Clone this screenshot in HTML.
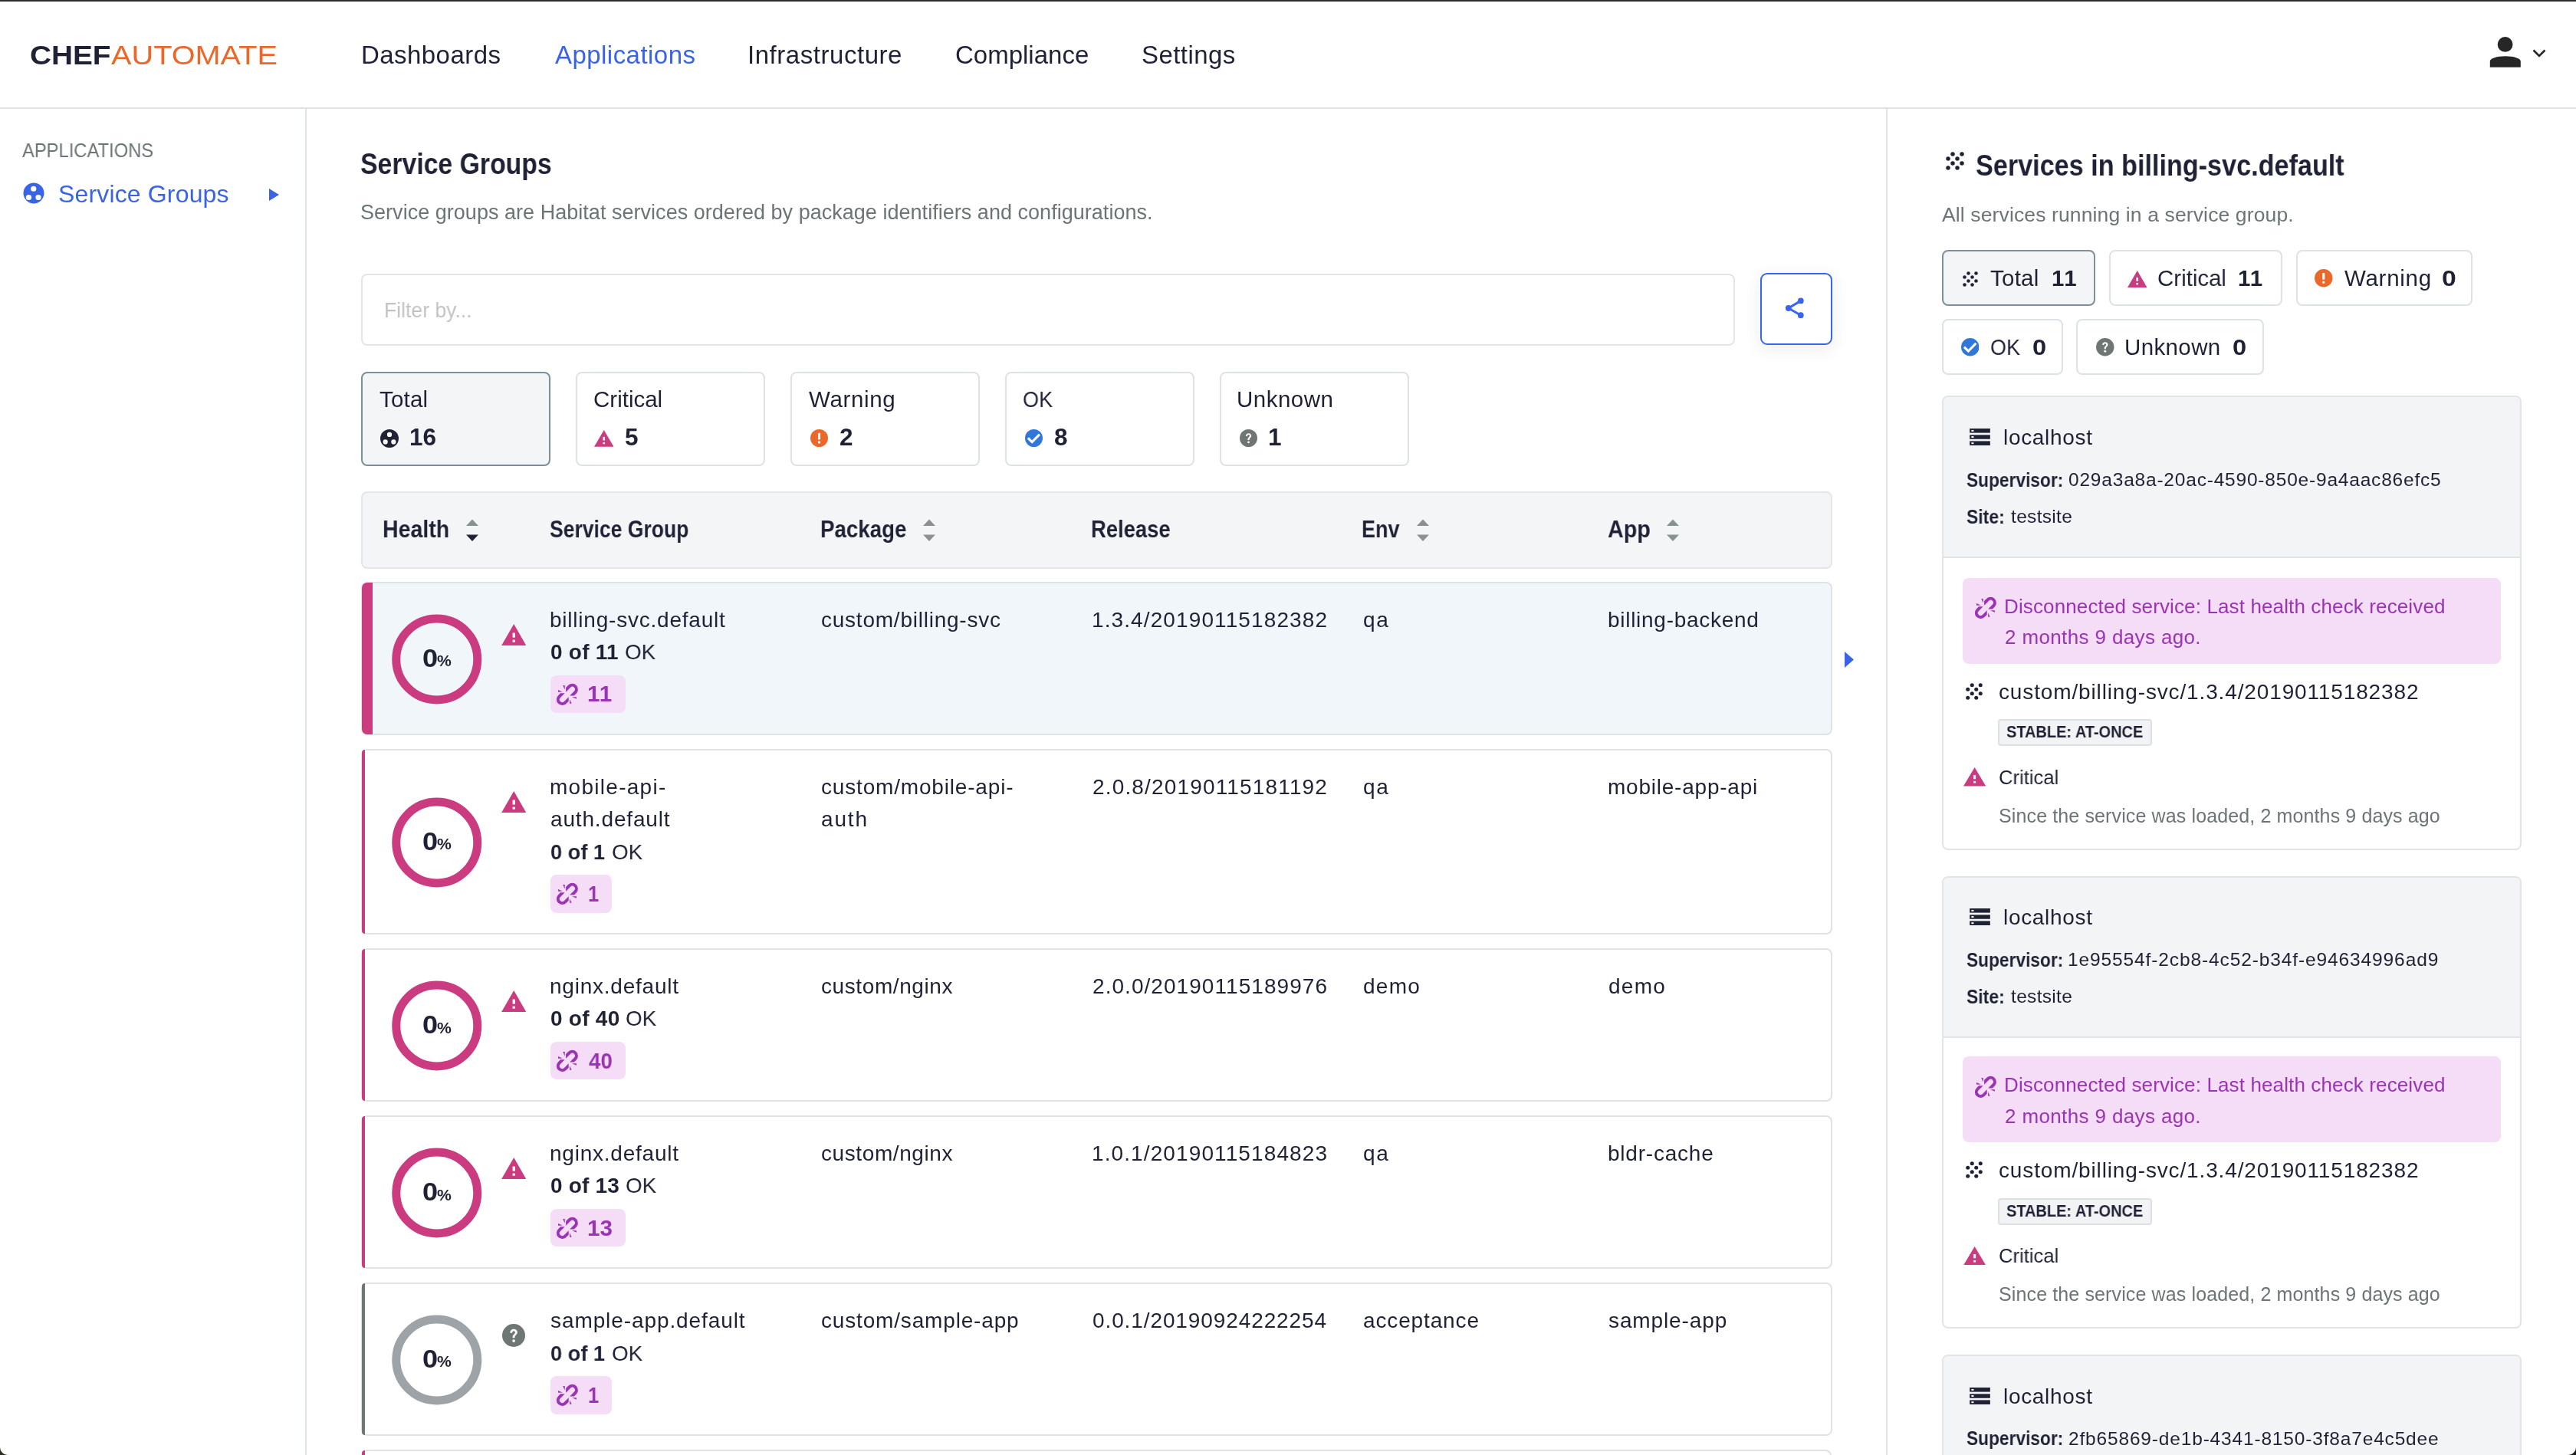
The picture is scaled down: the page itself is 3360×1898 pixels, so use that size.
<!DOCTYPE html>
<html><head><meta charset="utf-8"><title>Chef Automate - Service Groups</title>
<style>
html,body{margin:0;padding:0;}
body{width:3360px;height:1898px;position:relative;overflow:hidden;background:#fff;font-family:"Liberation Sans",sans-serif;}
.t{position:absolute;white-space:pre;line-height:1;will-change:transform;}
svg{display:block}
</style></head><body>
<div style="position:absolute;left:0px;top:0px;width:3360px;height:2px;background:#2b2f33"></div>
<div style="position:absolute;left:0px;top:140px;width:3360px;height:2px;background:#dfe3e8"></div>
<div style="position:absolute;left:398px;top:142px;width:2px;height:1756px;background:#dfe3e8"></div>
<div style="position:absolute;left:2460px;top:142px;width:2px;height:1756px;background:#dfe3e8"></div>
<svg style="position:absolute;left:3240px;top:40px" width="90" height="56" viewBox="3240 40 90 56">
<circle cx="3267.6" cy="57.9" r="9.9" fill="#262626"/>
<path d="M3247.8 87.8 V80 C3247.8 76 3257 73.2 3267.8 73.2 C3278.6 73.2 3287.8 76 3287.8 80 V87.8 Z" fill="#262626"/>
<polyline points="3304.5,65.5 3312,73 3319.5,65.5" fill="none" stroke="#262626" stroke-width="2.6"/>
</svg>
<svg style="position:absolute;left:30px;top:238px" width="28" height="28" viewBox="0 0 28 28">
<circle cx="14" cy="14" r="13.5" fill="#3a64e6"/>
<circle cx="13.75" cy="8.25" r="3.6" fill="#fff"/><circle cx="7.5" cy="19.5" r="3.6" fill="#fff"/><circle cx="20" cy="19.5" r="3.6" fill="#fff"/>
</svg>
<svg style="position:absolute;left:350px;top:245px" width="16" height="18" viewBox="0 0 16 18"><polygon points="1,1 14,9 1,17" fill="#3a64e6"/></svg>
<div style="position:absolute;left:470.5px;top:356.5px;width:1792.5px;height:94.25px;box-sizing:border-box;border:2px solid #e2e6ea;border-radius:8px;background:#fff"></div>
<div style="position:absolute;left:2296px;top:356px;width:94px;height:93.5px;box-sizing:border-box;border:2.5px solid #3864ee;border-radius:9px;background:#fff;box-shadow:0 5px 22px rgba(50,60,80,0.10)"></div>
<svg style="position:absolute;left:2320px;top:380px" width="44" height="44" viewBox="2320 380 44 44">
<line x1="2348.8" y1="392.4" x2="2332.8" y2="402" stroke="#3864ee" stroke-width="3"/>
<line x1="2348.8" y1="411.2" x2="2332.8" y2="402" stroke="#3864ee" stroke-width="3"/>
<circle cx="2348.8" cy="392.4" r="3.9" fill="#3864ee"/><circle cx="2332.8" cy="402" r="3.9" fill="#3864ee"/><circle cx="2348.8" cy="411.2" r="3.9" fill="#3864ee"/>
</svg>
<div style="position:absolute;left:470.5px;top:484.5px;width:247px;height:123px;box-sizing:border-box;border:2px solid #7d8f9b;border-radius:8px;background:#f4f5f7"></div>
<svg style="position:absolute;left:496.0px;top:559.5px" width="24" height="24" viewBox="0 0 27 27">
<circle cx="13.5" cy="13.5" r="13.5" fill="#1f2135"/>
<circle cx="13.5" cy="7.75" r="3.5" fill="#fff"/><circle cx="7.5" cy="18.5" r="3.5" fill="#fff"/><circle cx="19.5" cy="18.5" r="3.5" fill="#fff"/></svg>
<div style="position:absolute;left:750.5px;top:484.5px;width:247px;height:123px;box-sizing:border-box;border:2px solid #dde2e7;border-radius:8px;background:#fff"></div>
<svg style="position:absolute;left:775.0px;top:560.75px" width="25.5" height="21.75" viewBox="0 0 32.3 28.3" preserveAspectRatio="none">
<polygon points="16.15,0 32.3,28.3 0,28.3" fill="#cb3b7f"/>
<rect x="14.5" y="11.6" width="3.3" height="6" fill="#fff"/><rect x="14.5" y="20.7" width="3.3" height="3" fill="#fff"/></svg>
<div style="position:absolute;left:1030.5px;top:484.5px;width:247px;height:123px;box-sizing:border-box;border:2px solid #dde2e7;border-radius:8px;background:#fff"></div>
<svg style="position:absolute;left:1056.5px;top:560.0px" width="23" height="23" viewBox="0 0 24 24">
<circle cx="12" cy="12" r="12" fill="#e9682a"/><rect x="10.4" y="5" width="3.2" height="9" rx="1" fill="#fff"/><rect x="10.4" y="16" width="3.2" height="3.2" rx="1" fill="#fff"/></svg>
<div style="position:absolute;left:1310.5px;top:484.5px;width:247px;height:123px;box-sizing:border-box;border:2px solid #dde2e7;border-radius:8px;background:#fff"></div>
<svg style="position:absolute;left:1336.5px;top:560.0px" width="23" height="23" viewBox="0 0 24 24">
<circle cx="12" cy="12" r="12" fill="#2f77d8"/><polyline points="4,11.9 9.6,17.4 19.8,6.9" fill="none" stroke="#fff" stroke-width="3.2"/></svg>
<div style="position:absolute;left:1590.5px;top:484.5px;width:247px;height:123px;box-sizing:border-box;border:2px solid #dde2e7;border-radius:8px;background:#fff"></div>
<svg style="position:absolute;left:1616.5px;top:560.0px" width="23" height="23" viewBox="0 0 24 24">
<circle cx="12" cy="12" r="12" fill="#6f7775"/>
<path d="M8.3 9.3 C8.3 6.9 10 5.4 12.1 5.4 C14.3 5.4 15.9 6.8 15.9 8.8 C15.9 11.2 13.2 11.6 13.2 13.9 V14.6 H10.9 V13.7 C10.9 10.9 13.5 10.6 13.5 8.9 C13.5 8 12.9 7.4 12 7.4 C11 7.4 10.5 8.1 10.5 9.3 Z" fill="#fff"/>
<circle cx="12.05" cy="17.6" r="1.5" fill="#fff"/></svg>
<div style="position:absolute;left:470.5px;top:640.5px;width:1919.5px;height:101.25px;box-sizing:border-box;border:2px solid #e3e6ea;border-radius:8px;background:#f4f5f7"></div>
<svg style="position:absolute;left:608px;top:677px" width="16" height="30" viewBox="0 0 16 30">
<polygon points="8,0.5 16,9 0,9" fill="#8a9192"/><polygon points="0,20.5 16,20.5 8,29" fill="#1f2135"/></svg>
<svg style="position:absolute;left:1204.25px;top:677px" width="16" height="30" viewBox="0 0 16 30">
<polygon points="8,0.5 16,9 0,9" fill="#8a9192"/><polygon points="0,20.5 16,20.5 8,29" fill="#8a9192"/></svg>
<svg style="position:absolute;left:1848px;top:677px" width="16" height="30" viewBox="0 0 16 30">
<polygon points="8,0.5 16,9 0,9" fill="#8a9192"/><polygon points="0,20.5 16,20.5 8,29" fill="#8a9192"/></svg>
<svg style="position:absolute;left:2174px;top:677px" width="16" height="30" viewBox="0 0 16 30">
<polygon points="8,0.5 16,9 0,9" fill="#8a9192"/><polygon points="0,20.5 16,20.5 8,29" fill="#8a9192"/></svg>
<div style="position:absolute;left:470.5px;top:758.75px;width:1919.5px;height:200px;box-sizing:border-box;border:2px solid #dfe2e6;border-radius:8px;background:#f1f6fb;overflow:hidden"></div>
<div style="position:absolute;left:472px;top:759.75px;width:14px;height:198px;background:#cb3b7f;border-radius:7px 0 0 7px"></div>
<svg style="position:absolute;left:510px;top:799.75px" width="120" height="120" viewBox="0 0 120 120"><circle cx="59.75" cy="60" r="53" fill="none" stroke="#cb3b7f" stroke-width="11"/></svg>
<svg style="position:absolute;left:653.75px;top:813.75px" width="32.5" height="28.25" viewBox="0 0 32.3 28.3" preserveAspectRatio="none">
<polygon points="16.15,0 32.3,28.3 0,28.3" fill="#cb3b7f"/>
<rect x="14.5" y="11.6" width="3.3" height="6" fill="#fff"/><rect x="14.5" y="20.7" width="3.3" height="3" fill="#fff"/></svg>
<div style="position:absolute;left:718px;top:880.5px;width:97.5px;height:49.5px;background:#f5dcf7;border-radius:8px"></div>
<svg style="position:absolute;left:720px;top:884.5px" width="40" height="40" viewBox="0 0 40 40"><path d="M18.10 11.99 L21.30 8.80 A7.50 7.50 0 0 1 31.90 19.40 L28.81 22.50 L23.15 22.50 L29.07 16.57 A3.50 3.50 0 0 0 24.13 11.63 L18.10 17.65 Z M21.70 29.81 L18.50 33.00 A7.50 7.50 0 0 1 7.90 22.40 L10.99 19.30 L16.65 19.30 L10.73 25.23 A3.50 3.50 0 0 0 15.67 30.17 L21.70 24.15 Z M14.3 9.07 L16.77 9.07 L16.63 14.85 Z M7.97 15.12 L7.97 17.87 L13.75 17.6 Z M26.1 24.2 L31.9 24.2 L31.9 26.7 Z M23.1 27.2 L25.6 32.7 L23.1 32.7 Z" fill="#9a33b4"/></svg>
<div style="position:absolute;left:470.5px;top:976.75px;width:1919.5px;height:242px;box-sizing:border-box;border:2px solid #dfe2e6;border-radius:8px;background:#fff;overflow:hidden"></div>
<div style="position:absolute;left:472px;top:977.75px;width:4px;height:240px;background:#cb3b7f;border-radius:7px 0 0 7px"></div>
<svg style="position:absolute;left:510px;top:1038.75px" width="120" height="120" viewBox="0 0 120 120"><circle cx="59.75" cy="60" r="53" fill="none" stroke="#cb3b7f" stroke-width="11"/></svg>
<svg style="position:absolute;left:653.75px;top:1031.75px" width="32.5" height="28.25" viewBox="0 0 32.3 28.3" preserveAspectRatio="none">
<polygon points="16.15,0 32.3,28.3 0,28.3" fill="#cb3b7f"/>
<rect x="14.5" y="11.6" width="3.3" height="6" fill="#fff"/><rect x="14.5" y="20.7" width="3.3" height="3" fill="#fff"/></svg>
<div style="position:absolute;left:718px;top:1141.0px;width:79.5px;height:49.5px;background:#f5dcf7;border-radius:8px"></div>
<svg style="position:absolute;left:720px;top:1145.0px" width="40" height="40" viewBox="0 0 40 40"><path d="M18.10 11.99 L21.30 8.80 A7.50 7.50 0 0 1 31.90 19.40 L28.81 22.50 L23.15 22.50 L29.07 16.57 A3.50 3.50 0 0 0 24.13 11.63 L18.10 17.65 Z M21.70 29.81 L18.50 33.00 A7.50 7.50 0 0 1 7.90 22.40 L10.99 19.30 L16.65 19.30 L10.73 25.23 A3.50 3.50 0 0 0 15.67 30.17 L21.70 24.15 Z M14.3 9.07 L16.77 9.07 L16.63 14.85 Z M7.97 15.12 L7.97 17.87 L13.75 17.6 Z M26.1 24.2 L31.9 24.2 L31.9 26.7 Z M23.1 27.2 L25.6 32.7 L23.1 32.7 Z" fill="#9a33b4"/></svg>
<div style="position:absolute;left:470.5px;top:1237px;width:1919.5px;height:200px;box-sizing:border-box;border:2px solid #dfe2e6;border-radius:8px;background:#fff;overflow:hidden"></div>
<div style="position:absolute;left:472px;top:1238px;width:4px;height:198px;background:#cb3b7f;border-radius:7px 0 0 7px"></div>
<svg style="position:absolute;left:510px;top:1278.0px" width="120" height="120" viewBox="0 0 120 120"><circle cx="59.75" cy="60" r="53" fill="none" stroke="#cb3b7f" stroke-width="11"/></svg>
<svg style="position:absolute;left:653.75px;top:1292px" width="32.5" height="28.25" viewBox="0 0 32.3 28.3" preserveAspectRatio="none">
<polygon points="16.15,0 32.3,28.3 0,28.3" fill="#cb3b7f"/>
<rect x="14.5" y="11.6" width="3.3" height="6" fill="#fff"/><rect x="14.5" y="20.7" width="3.3" height="3" fill="#fff"/></svg>
<div style="position:absolute;left:718px;top:1358.75px;width:97.5px;height:49.5px;background:#f5dcf7;border-radius:8px"></div>
<svg style="position:absolute;left:720px;top:1362.75px" width="40" height="40" viewBox="0 0 40 40"><path d="M18.10 11.99 L21.30 8.80 A7.50 7.50 0 0 1 31.90 19.40 L28.81 22.50 L23.15 22.50 L29.07 16.57 A3.50 3.50 0 0 0 24.13 11.63 L18.10 17.65 Z M21.70 29.81 L18.50 33.00 A7.50 7.50 0 0 1 7.90 22.40 L10.99 19.30 L16.65 19.30 L10.73 25.23 A3.50 3.50 0 0 0 15.67 30.17 L21.70 24.15 Z M14.3 9.07 L16.77 9.07 L16.63 14.85 Z M7.97 15.12 L7.97 17.87 L13.75 17.6 Z M26.1 24.2 L31.9 24.2 L31.9 26.7 Z M23.1 27.2 L25.6 32.7 L23.1 32.7 Z" fill="#9a33b4"/></svg>
<div style="position:absolute;left:470.5px;top:1455px;width:1919.5px;height:200px;box-sizing:border-box;border:2px solid #dfe2e6;border-radius:8px;background:#fff;overflow:hidden"></div>
<div style="position:absolute;left:472px;top:1456px;width:4px;height:198px;background:#cb3b7f;border-radius:7px 0 0 7px"></div>
<svg style="position:absolute;left:510px;top:1496.0px" width="120" height="120" viewBox="0 0 120 120"><circle cx="59.75" cy="60" r="53" fill="none" stroke="#cb3b7f" stroke-width="11"/></svg>
<svg style="position:absolute;left:653.75px;top:1510px" width="32.5" height="28.25" viewBox="0 0 32.3 28.3" preserveAspectRatio="none">
<polygon points="16.15,0 32.3,28.3 0,28.3" fill="#cb3b7f"/>
<rect x="14.5" y="11.6" width="3.3" height="6" fill="#fff"/><rect x="14.5" y="20.7" width="3.3" height="3" fill="#fff"/></svg>
<div style="position:absolute;left:718px;top:1576.75px;width:97.5px;height:49.5px;background:#f5dcf7;border-radius:8px"></div>
<svg style="position:absolute;left:720px;top:1580.75px" width="40" height="40" viewBox="0 0 40 40"><path d="M18.10 11.99 L21.30 8.80 A7.50 7.50 0 0 1 31.90 19.40 L28.81 22.50 L23.15 22.50 L29.07 16.57 A3.50 3.50 0 0 0 24.13 11.63 L18.10 17.65 Z M21.70 29.81 L18.50 33.00 A7.50 7.50 0 0 1 7.90 22.40 L10.99 19.30 L16.65 19.30 L10.73 25.23 A3.50 3.50 0 0 0 15.67 30.17 L21.70 24.15 Z M14.3 9.07 L16.77 9.07 L16.63 14.85 Z M7.97 15.12 L7.97 17.87 L13.75 17.6 Z M26.1 24.2 L31.9 24.2 L31.9 26.7 Z M23.1 27.2 L25.6 32.7 L23.1 32.7 Z" fill="#9a33b4"/></svg>
<div style="position:absolute;left:470.5px;top:1673.25px;width:1919.5px;height:199.25px;box-sizing:border-box;border:2px solid #dfe2e6;border-radius:8px;background:#fff;overflow:hidden"></div>
<div style="position:absolute;left:472px;top:1674.25px;width:4px;height:197.25px;background:#6f7775;border-radius:7px 0 0 7px"></div>
<svg style="position:absolute;left:510px;top:1713.875px" width="120" height="120" viewBox="0 0 120 120"><circle cx="59.75" cy="60" r="53" fill="none" stroke="#9ea3a7" stroke-width="11"/></svg>
<svg style="position:absolute;left:655.0px;top:1727.25px" width="30" height="30" viewBox="0 0 24 24">
<circle cx="12" cy="12" r="12" fill="#6f7775"/>
<path d="M8.3 9.3 C8.3 6.9 10 5.4 12.1 5.4 C14.3 5.4 15.9 6.8 15.9 8.8 C15.9 11.2 13.2 11.6 13.2 13.9 V14.6 H10.9 V13.7 C10.9 10.9 13.5 10.6 13.5 8.9 C13.5 8 12.9 7.4 12 7.4 C11 7.4 10.5 8.1 10.5 9.3 Z" fill="#fff"/>
<circle cx="12.05" cy="17.6" r="1.5" fill="#fff"/></svg>
<div style="position:absolute;left:718px;top:1795.0px;width:79.5px;height:49.5px;background:#f5dcf7;border-radius:8px"></div>
<svg style="position:absolute;left:720px;top:1799.0px" width="40" height="40" viewBox="0 0 40 40"><path d="M18.10 11.99 L21.30 8.80 A7.50 7.50 0 0 1 31.90 19.40 L28.81 22.50 L23.15 22.50 L29.07 16.57 A3.50 3.50 0 0 0 24.13 11.63 L18.10 17.65 Z M21.70 29.81 L18.50 33.00 A7.50 7.50 0 0 1 7.90 22.40 L10.99 19.30 L16.65 19.30 L10.73 25.23 A3.50 3.50 0 0 0 15.67 30.17 L21.70 24.15 Z M14.3 9.07 L16.77 9.07 L16.63 14.85 Z M7.97 15.12 L7.97 17.87 L13.75 17.6 Z M26.1 24.2 L31.9 24.2 L31.9 26.7 Z M23.1 27.2 L25.6 32.7 L23.1 32.7 Z" fill="#9a33b4"/></svg>
<svg style="position:absolute;left:2405px;top:849px" width="14" height="24" viewBox="0 0 14 24"><polygon points="1,1 13,11.5 1,22" fill="#3a64e6"/></svg>
<div style="position:absolute;left:470.5px;top:1891.25px;width:1918.5px;height:40px;box-sizing:border-box;border:2px solid #dfe2e6;border-radius:8px;background:#fff"></div>
<div style="position:absolute;left:472px;top:1892.25px;width:4px;height:10px;background:#cb3b7f;border-radius:7px 0 0 0"></div>
<svg style="position:absolute;left:2538px;top:198px" width="24" height="24" viewBox="0 0 24 24"><circle cx="9" cy="3" r="2.75" fill="#1f2135"/><circle cx="21" cy="3" r="2.75" fill="#1f2135"/><circle cx="3" cy="9" r="2.75" fill="#1f2135"/><circle cx="15" cy="9" r="2.75" fill="#1f2135"/><circle cx="9" cy="15" r="2.75" fill="#1f2135"/><circle cx="21" cy="15" r="2.75" fill="#1f2135"/><circle cx="3" cy="21" r="2.75" fill="#1f2135"/><circle cx="15" cy="21" r="2.75" fill="#1f2135"/></svg>
<div style="position:absolute;left:2532.5px;top:326.25px;width:200.5px;height:73px;box-sizing:border-box;border:2px solid #7d8f9b;border-radius:8px;background:#f4f5f7"></div>
<svg style="position:absolute;left:2560px;top:354px" width="20" height="20" viewBox="0 0 24 24"><circle cx="9" cy="3" r="2.75" fill="#1f2135"/><circle cx="21" cy="3" r="2.75" fill="#1f2135"/><circle cx="3" cy="9" r="2.75" fill="#1f2135"/><circle cx="15" cy="9" r="2.75" fill="#1f2135"/><circle cx="9" cy="15" r="2.75" fill="#1f2135"/><circle cx="21" cy="15" r="2.75" fill="#1f2135"/><circle cx="3" cy="21" r="2.75" fill="#1f2135"/><circle cx="15" cy="21" r="2.75" fill="#1f2135"/></svg>
<div style="position:absolute;left:2750.5px;top:326.25px;width:226.5px;height:73px;box-sizing:border-box;border:2px solid #dde2e7;border-radius:8px;background:#fff"></div>
<svg style="position:absolute;left:2775px;top:352.5px" width="25.5" height="22" viewBox="0 0 32.3 28.3" preserveAspectRatio="none">
<polygon points="16.15,0 32.3,28.3 0,28.3" fill="#cb3b7f"/>
<rect x="14.5" y="11.6" width="3.3" height="6" fill="#fff"/><rect x="14.5" y="20.7" width="3.3" height="3" fill="#fff"/></svg>
<div style="position:absolute;left:2994.6px;top:326.25px;width:230.6px;height:73px;box-sizing:border-box;border:2px solid #dde2e7;border-radius:8px;background:#fff"></div>
<svg style="position:absolute;left:3019.25px;top:351.0px" width="23.5" height="23.5" viewBox="0 0 24 24">
<circle cx="12" cy="12" r="12" fill="#e9682a"/><rect x="10.4" y="5" width="3.2" height="9" rx="1" fill="#fff"/><rect x="10.4" y="16" width="3.2" height="3.2" rx="1" fill="#fff"/></svg>
<div style="position:absolute;left:2532.5px;top:416.25px;width:158.25px;height:73px;box-sizing:border-box;border:2px solid #dde2e7;border-radius:8px;background:#fff"></div>
<svg style="position:absolute;left:2557.85px;top:441.0px" width="23.5" height="23.5" viewBox="0 0 24 24">
<circle cx="12" cy="12" r="12" fill="#2f77d8"/><polyline points="4,11.9 9.6,17.4 19.8,6.9" fill="none" stroke="#fff" stroke-width="3.2"/></svg>
<div style="position:absolute;left:2708.25px;top:416.25px;width:244.25px;height:73px;box-sizing:border-box;border:2px solid #dde2e7;border-radius:8px;background:#fff"></div>
<svg style="position:absolute;left:2734.25px;top:441.0px" width="23.5" height="23.5" viewBox="0 0 24 24">
<circle cx="12" cy="12" r="12" fill="#6f7775"/>
<path d="M8.3 9.3 C8.3 6.9 10 5.4 12.1 5.4 C14.3 5.4 15.9 6.8 15.9 8.8 C15.9 11.2 13.2 11.6 13.2 13.9 V14.6 H10.9 V13.7 C10.9 10.9 13.5 10.6 13.5 8.9 C13.5 8 12.9 7.4 12 7.4 C11 7.4 10.5 8.1 10.5 9.3 Z" fill="#fff"/>
<circle cx="12.05" cy="17.6" r="1.5" fill="#fff"/></svg>
<div style="position:absolute;left:2532.5px;top:516.25px;width:756.5px;height:592.5px;box-sizing:border-box;border:2px solid #e1e4e8;border-radius:8px;background:#fff;overflow:hidden"></div>
<div style="position:absolute;left:2534.5px;top:518.25px;width:752.5px;height:208.5px;background:#f3f4f6;border-radius:6px 6px 0 0"></div>
<div style="position:absolute;left:2534.5px;top:725.75px;width:752.5px;height:2px;background:#e1e4e8"></div>
<svg style="position:absolute;left:2568.9px;top:559.1px" width="27" height="22" viewBox="0 0 26.2 21.6">
<rect x="0" y="0" width="26.2" height="5.5" fill="#1f2135"/><rect x="0" y="8.2" width="26.2" height="5.3" fill="#1f2135"/><rect x="0" y="16.1" width="26.2" height="5.5" fill="#1f2135"/>
<rect x="2.2" y="1.9" width="3" height="1.9" fill="#fff"/><rect x="2.2" y="9.9" width="3" height="1.9" fill="#fff"/><rect x="2.2" y="17.9" width="3" height="1.9" fill="#fff"/></svg>
<div style="position:absolute;left:2560px;top:753.75px;width:701.8px;height:111.75px;background:#f5dcf7;border-radius:8px"></div>
<svg style="position:absolute;left:2569.6px;top:772.25px" width="40" height="40" viewBox="0 0 40 40"><path d="M18.10 11.99 L21.30 8.80 A7.50 7.50 0 0 1 31.90 19.40 L28.81 22.50 L23.15 22.50 L29.07 16.57 A3.50 3.50 0 0 0 24.13 11.63 L18.10 17.65 Z M21.70 29.81 L18.50 33.00 A7.50 7.50 0 0 1 7.90 22.40 L10.99 19.30 L16.65 19.30 L10.73 25.23 A3.50 3.50 0 0 0 15.67 30.17 L21.70 24.15 Z M14.3 9.07 L16.77 9.07 L16.63 14.85 Z M7.97 15.12 L7.97 17.87 L13.75 17.6 Z M26.1 24.2 L31.9 24.2 L31.9 26.7 Z M23.1 27.2 L25.6 32.7 L23.1 32.7 Z" fill="#9a33b4"/></svg>
<svg style="position:absolute;left:2564px;top:890.75px" width="22" height="22" viewBox="0 0 24 24"><circle cx="9" cy="3" r="2.75" fill="#1f2135"/><circle cx="21" cy="3" r="2.75" fill="#1f2135"/><circle cx="3" cy="9" r="2.75" fill="#1f2135"/><circle cx="15" cy="9" r="2.75" fill="#1f2135"/><circle cx="9" cy="15" r="2.75" fill="#1f2135"/><circle cx="21" cy="15" r="2.75" fill="#1f2135"/><circle cx="3" cy="21" r="2.75" fill="#1f2135"/><circle cx="15" cy="21" r="2.75" fill="#1f2135"/></svg>
<div style="position:absolute;left:2606.25px;top:938.25px;width:200.75px;height:35px;box-sizing:border-box;border:2px solid #dcdfe3;border-radius:4px;background:#f2f3f5"></div>
<svg style="position:absolute;left:2560.75px;top:1001.25px" width="29.25" height="24.5" viewBox="0 0 32.3 28.3" preserveAspectRatio="none">
<polygon points="16.15,0 32.3,28.3 0,28.3" fill="#cb3b7f"/>
<rect x="14.5" y="11.6" width="3.3" height="6" fill="#fff"/><rect x="14.5" y="20.7" width="3.3" height="3" fill="#fff"/></svg>
<div style="position:absolute;left:2532.5px;top:1142.5px;width:756.5px;height:590.2px;box-sizing:border-box;border:2px solid #e1e4e8;border-radius:8px;background:#fff;overflow:hidden"></div>
<div style="position:absolute;left:2534.5px;top:1144.5px;width:752.5px;height:208.5px;background:#f3f4f6;border-radius:6px 6px 0 0"></div>
<div style="position:absolute;left:2534.5px;top:1352.0px;width:752.5px;height:2px;background:#e1e4e8"></div>
<svg style="position:absolute;left:2568.9px;top:1185.35px" width="27" height="22" viewBox="0 0 26.2 21.6">
<rect x="0" y="0" width="26.2" height="5.5" fill="#1f2135"/><rect x="0" y="8.2" width="26.2" height="5.3" fill="#1f2135"/><rect x="0" y="16.1" width="26.2" height="5.5" fill="#1f2135"/>
<rect x="2.2" y="1.9" width="3" height="1.9" fill="#fff"/><rect x="2.2" y="9.9" width="3" height="1.9" fill="#fff"/><rect x="2.2" y="17.9" width="3" height="1.9" fill="#fff"/></svg>
<div style="position:absolute;left:2560px;top:1378.0px;width:701.8px;height:111.75px;background:#f5dcf7;border-radius:8px"></div>
<svg style="position:absolute;left:2569.6px;top:1396.5px" width="40" height="40" viewBox="0 0 40 40"><path d="M18.10 11.99 L21.30 8.80 A7.50 7.50 0 0 1 31.90 19.40 L28.81 22.50 L23.15 22.50 L29.07 16.57 A3.50 3.50 0 0 0 24.13 11.63 L18.10 17.65 Z M21.70 29.81 L18.50 33.00 A7.50 7.50 0 0 1 7.90 22.40 L10.99 19.30 L16.65 19.30 L10.73 25.23 A3.50 3.50 0 0 0 15.67 30.17 L21.70 24.15 Z M14.3 9.07 L16.77 9.07 L16.63 14.85 Z M7.97 15.12 L7.97 17.87 L13.75 17.6 Z M26.1 24.2 L31.9 24.2 L31.9 26.7 Z M23.1 27.2 L25.6 32.7 L23.1 32.7 Z" fill="#9a33b4"/></svg>
<svg style="position:absolute;left:2564px;top:1515.0px" width="22" height="22" viewBox="0 0 24 24"><circle cx="9" cy="3" r="2.75" fill="#1f2135"/><circle cx="21" cy="3" r="2.75" fill="#1f2135"/><circle cx="3" cy="9" r="2.75" fill="#1f2135"/><circle cx="15" cy="9" r="2.75" fill="#1f2135"/><circle cx="9" cy="15" r="2.75" fill="#1f2135"/><circle cx="21" cy="15" r="2.75" fill="#1f2135"/><circle cx="3" cy="21" r="2.75" fill="#1f2135"/><circle cx="15" cy="21" r="2.75" fill="#1f2135"/></svg>
<div style="position:absolute;left:2606.25px;top:1562.5px;width:200.75px;height:35px;box-sizing:border-box;border:2px solid #dcdfe3;border-radius:4px;background:#f2f3f5"></div>
<svg style="position:absolute;left:2560.75px;top:1625.5px" width="29.25" height="24.5" viewBox="0 0 32.3 28.3" preserveAspectRatio="none">
<polygon points="16.15,0 32.3,28.3 0,28.3" fill="#cb3b7f"/>
<rect x="14.5" y="11.6" width="3.3" height="6" fill="#fff"/><rect x="14.5" y="20.7" width="3.3" height="3" fill="#fff"/></svg>
<div style="position:absolute;left:2532.5px;top:1766.9px;width:756.5px;height:592.5px;box-sizing:border-box;border:2px solid #e1e4e8;border-radius:8px;background:#fff;overflow:hidden"></div>
<div style="position:absolute;left:2534.5px;top:1768.9px;width:752.5px;height:208.5px;background:#f3f4f6;border-radius:6px 6px 0 0"></div>
<div style="position:absolute;left:2534.5px;top:1976.4px;width:752.5px;height:2px;background:#e1e4e8"></div>
<svg style="position:absolute;left:2568.9px;top:1809.75px" width="27" height="22" viewBox="0 0 26.2 21.6">
<rect x="0" y="0" width="26.2" height="5.5" fill="#1f2135"/><rect x="0" y="8.2" width="26.2" height="5.3" fill="#1f2135"/><rect x="0" y="16.1" width="26.2" height="5.5" fill="#1f2135"/>
<rect x="2.2" y="1.9" width="3" height="1.9" fill="#fff"/><rect x="2.2" y="9.9" width="3" height="1.9" fill="#fff"/><rect x="2.2" y="17.9" width="3" height="1.9" fill="#fff"/></svg>
<div style="position:absolute;left:2560px;top:2004.4px;width:701.8px;height:111.75px;background:#f5dcf7;border-radius:8px"></div>
<svg style="position:absolute;left:2569.6px;top:2022.9px" width="40" height="40" viewBox="0 0 40 40"><path d="M18.10 11.99 L21.30 8.80 A7.50 7.50 0 0 1 31.90 19.40 L28.81 22.50 L23.15 22.50 L29.07 16.57 A3.50 3.50 0 0 0 24.13 11.63 L18.10 17.65 Z M21.70 29.81 L18.50 33.00 A7.50 7.50 0 0 1 7.90 22.40 L10.99 19.30 L16.65 19.30 L10.73 25.23 A3.50 3.50 0 0 0 15.67 30.17 L21.70 24.15 Z M14.3 9.07 L16.77 9.07 L16.63 14.85 Z M7.97 15.12 L7.97 17.87 L13.75 17.6 Z M26.1 24.2 L31.9 24.2 L31.9 26.7 Z M23.1 27.2 L25.6 32.7 L23.1 32.7 Z" fill="#9a33b4"/></svg>
<svg style="position:absolute;left:2564px;top:2141.4px" width="22" height="22" viewBox="0 0 24 24"><circle cx="9" cy="3" r="2.75" fill="#1f2135"/><circle cx="21" cy="3" r="2.75" fill="#1f2135"/><circle cx="3" cy="9" r="2.75" fill="#1f2135"/><circle cx="15" cy="9" r="2.75" fill="#1f2135"/><circle cx="9" cy="15" r="2.75" fill="#1f2135"/><circle cx="21" cy="15" r="2.75" fill="#1f2135"/><circle cx="3" cy="21" r="2.75" fill="#1f2135"/><circle cx="15" cy="21" r="2.75" fill="#1f2135"/></svg>
<div style="position:absolute;left:2606.25px;top:2188.9px;width:200.75px;height:35px;box-sizing:border-box;border:2px solid #dcdfe3;border-radius:4px;background:#f2f3f5"></div>
<svg style="position:absolute;left:2560.75px;top:2251.9px" width="29.25" height="24.5" viewBox="0 0 32.3 28.3" preserveAspectRatio="none">
<polygon points="16.15,0 32.3,28.3 0,28.3" fill="#cb3b7f"/>
<rect x="14.5" y="11.6" width="3.3" height="6" fill="#fff"/><rect x="14.5" y="20.7" width="3.3" height="3" fill="#fff"/></svg>
<svg style="position:absolute;left:0;top:1888px" width="10" height="10" viewBox="0 0 10 10"><path d="M0 0 A10 10 0 0 0 10 10 H0 Z" fill="#2a2f1a"/></svg>
<svg style="position:absolute;left:3350px;top:1888px" width="10" height="10" viewBox="0 0 10 10"><path d="M10 0 A10 10 0 0 1 0 10 H10 Z" fill="#1a1a1a"/></svg>
<div id="t0" class="t" style="left:38.50px;top:54.07px;font-size:35px;font-weight:700;color:#1f2135;letter-spacing:0.000px;transform:scaleX(1.1075);transform-origin:0 0">CHEF</div>
<div id="t1" class="t" style="left:145.00px;top:54.07px;font-size:35px;font-weight:400;color:#e9682a;letter-spacing:0.000px;transform:scaleX(1.1342);transform-origin:0 0">AUTOMATE</div>
<div id="t2" class="t" style="left:470.50px;top:54.52px;font-size:33px;font-weight:400;color:#1f2135;letter-spacing:0.444px">Dashboards</div>
<div id="t3" class="t" style="left:723.50px;top:54.52px;font-size:33px;font-weight:400;color:#3a64e6;letter-spacing:0.455px">Applications</div>
<div id="t4" class="t" style="left:975.00px;top:54.52px;font-size:33px;font-weight:400;color:#1f2135;letter-spacing:0.538px">Infrastructure</div>
<div id="t5" class="t" style="left:1245.50px;top:54.52px;font-size:33px;font-weight:400;color:#1f2135;letter-spacing:0.000px">Compliance</div>
<div id="t6" class="t" style="left:1488.50px;top:54.52px;font-size:33px;font-weight:400;color:#1f2135;letter-spacing:0.429px">Settings</div>
<div id="t7" class="t" style="left:28.75px;top:183.78px;font-size:25px;font-weight:400;color:#6b7574;letter-spacing:0.000px;transform:scaleX(0.9497);transform-origin:0 0">APPLICATIONS</div>
<div id="t8" class="t" style="left:75.50px;top:237.11px;font-size:32px;font-weight:400;color:#3a64e6;letter-spacing:0.154px">Service Groups</div>
<div id="t9" class="t" style="left:469.50px;top:195.29px;font-size:38px;font-weight:700;color:#1f2135;letter-spacing:0.000px;transform:scaleX(0.8889);transform-origin:0 0">Service Groups</div>
<div id="t10" class="t" style="left:469.50px;top:263.83px;font-size:27px;font-weight:400;color:#6b7574;letter-spacing:0.029px">Service groups are Habitat services ordered by package identifiers and configurations.</div>
<div id="t11" class="t" style="left:501.00px;top:391.24px;font-size:28px;font-weight:400;color:#c3c3c3;letter-spacing:0.000px;transform:scaleX(0.9483);transform-origin:0 0">Filter by...</div>
<div id="t12" class="t" style="left:494.50px;top:505.97px;font-size:29.5px;font-weight:400;color:#1f2135;letter-spacing:0.188px">Total</div>
<div id="t13" class="t" style="left:533.50px;top:554.53px;font-size:31.5px;font-weight:700;color:#1f2135;letter-spacing:0.000px">16</div>
<div id="t14" class="t" style="left:773.50px;top:505.97px;font-size:29.5px;font-weight:400;color:#1f2135;letter-spacing:0.000px">Critical</div>
<div id="t15" class="t" style="left:814.50px;top:554.53px;font-size:31.5px;font-weight:700;color:#1f2135;letter-spacing:0.000px">5</div>
<div id="t16" class="t" style="left:1054.50px;top:505.97px;font-size:29.5px;font-weight:400;color:#1f2135;letter-spacing:0.667px">Warning</div>
<div id="t17" class="t" style="left:1094.50px;top:554.53px;font-size:31.5px;font-weight:700;color:#1f2135;letter-spacing:0.000px">2</div>
<div id="t18" class="t" style="left:1333.50px;top:505.97px;font-size:29.5px;font-weight:400;color:#1f2135;letter-spacing:0.000px;transform:scaleX(0.9171);transform-origin:0 0">OK</div>
<div id="t19" class="t" style="left:1374.50px;top:554.53px;font-size:31.5px;font-weight:700;color:#1f2135;letter-spacing:0.000px">8</div>
<div id="t20" class="t" style="left:1612.50px;top:505.97px;font-size:29.5px;font-weight:400;color:#1f2135;letter-spacing:0.500px">Unknown</div>
<div id="t21" class="t" style="left:1653.50px;top:554.53px;font-size:31.5px;font-weight:700;color:#1f2135;letter-spacing:0.000px">1</div>
<div id="t22" class="t" style="left:498.75px;top:674.53px;font-size:31.5px;font-weight:700;color:#1f2135;letter-spacing:0.000px;transform:scaleX(0.9059);transform-origin:0 0">Health</div>
<div id="t23" class="t" style="left:717.00px;top:674.53px;font-size:31.5px;font-weight:700;color:#1f2135;letter-spacing:0.000px;transform:scaleX(0.8427);transform-origin:0 0">Service Group</div>
<div id="t24" class="t" style="left:1070.00px;top:674.53px;font-size:31.5px;font-weight:700;color:#1f2135;letter-spacing:0.000px;transform:scaleX(0.8800);transform-origin:0 0">Package</div>
<div id="t25" class="t" style="left:1423.00px;top:674.53px;font-size:31.5px;font-weight:700;color:#1f2135;letter-spacing:0.000px;transform:scaleX(0.8707);transform-origin:0 0">Release</div>
<div id="t26" class="t" style="left:1776.00px;top:674.53px;font-size:31.5px;font-weight:700;color:#1f2135;letter-spacing:0.000px;transform:scaleX(0.8571);transform-origin:0 0">Env</div>
<div id="t27" class="t" style="left:2097.30px;top:674.53px;font-size:31.5px;font-weight:700;color:#1f2135;letter-spacing:0.000px;transform:scaleX(0.9119);transform-origin:0 0">App</div>
<div id="t28" class="t" style="left:550.75px;top:841.76px;font-size:33px;font-weight:700;color:#1f2135;letter-spacing:0.000px;transform:scaleX(1.0938);transform-origin:0 0">0</div>
<div id="t29" class="t" style="left:570.00px;top:852.25px;font-size:20px;font-weight:700;color:#1f2135;letter-spacing:0.000px;transform:scaleX(1.0588);transform-origin:0 0">%</div>
<div id="t30" class="t" style="left:716.75px;top:794.74px;font-size:28px;font-weight:400;color:#1f2135;letter-spacing:0.778px">billing-svc.default</div>
<div id="t31" class="t" style="left:717.75px;top:837.24px;font-size:28px;font-weight:700;color:#1f2135;letter-spacing:0.250px">0 of 11</div>
<div id="t32" class="t" style="left:815.25px;top:837.24px;font-size:28px;font-weight:400;color:#1f2135;letter-spacing:0.000px;transform:scaleX(0.9936);transform-origin:0 0">OK</div>
<div id="t33" class="t" style="left:766.00px;top:890.47px;font-size:29.5px;font-weight:700;color:#9a33b4;letter-spacing:1.000px">11</div>
<div id="t34" class="t" style="left:1071.00px;top:794.74px;font-size:28px;font-weight:400;color:#1f2135;letter-spacing:0.765px">custom/billing-svc</div>
<div id="t35" class="t" style="left:1424.00px;top:794.74px;font-size:28px;font-weight:400;color:#1f2135;letter-spacing:1.105px">1.3.4/20190115182382</div>
<div id="t36" class="t" style="left:1777.75px;top:794.74px;font-size:28px;font-weight:400;color:#1f2135;letter-spacing:1.650px">qa</div>
<div id="t37" class="t" style="left:2096.75px;top:794.74px;font-size:28px;font-weight:400;color:#1f2135;letter-spacing:0.719px">billing-backend</div>
<div id="t38" class="t" style="left:550.75px;top:1080.77px;font-size:33px;font-weight:700;color:#1f2135;letter-spacing:0.000px;transform:scaleX(1.0938);transform-origin:0 0">0</div>
<div id="t39" class="t" style="left:570.00px;top:1091.25px;font-size:20px;font-weight:700;color:#1f2135;letter-spacing:0.000px;transform:scaleX(1.0588);transform-origin:0 0">%</div>
<div id="t40" class="t" style="left:716.75px;top:1012.74px;font-size:28px;font-weight:400;color:#1f2135;letter-spacing:1.275px">mobile-api-</div>
<div id="t41" class="t" style="left:717.75px;top:1055.24px;font-size:28px;font-weight:400;color:#1f2135;letter-spacing:0.841px">auth.default</div>
<div id="t42" class="t" style="left:717.75px;top:1097.74px;font-size:28px;font-weight:700;color:#1f2135;letter-spacing:0.000px;transform:scaleX(0.9722);transform-origin:0 0">0 of 1</div>
<div id="t43" class="t" style="left:797.75px;top:1097.74px;font-size:28px;font-weight:400;color:#1f2135;letter-spacing:0.000px;transform:scaleX(0.9936);transform-origin:0 0">OK</div>
<div id="t44" class="t" style="left:767.00px;top:1150.97px;font-size:29.5px;font-weight:700;color:#9a33b4;letter-spacing:0.000px;transform:scaleX(0.8571);transform-origin:0 0">1</div>
<div id="t45" class="t" style="left:1071.00px;top:1012.74px;font-size:28px;font-weight:400;color:#1f2135;letter-spacing:0.824px">custom/mobile-api-</div>
<div id="t46" class="t" style="left:1071.00px;top:1055.24px;font-size:28px;font-weight:400;color:#1f2135;letter-spacing:1.833px">auth</div>
<div id="t47" class="t" style="left:1425.00px;top:1012.74px;font-size:28px;font-weight:400;color:#1f2135;letter-spacing:1.158px">2.0.8/20190115181192</div>
<div id="t48" class="t" style="left:1777.75px;top:1012.74px;font-size:28px;font-weight:400;color:#1f2135;letter-spacing:1.650px">qa</div>
<div id="t49" class="t" style="left:2096.75px;top:1012.74px;font-size:28px;font-weight:400;color:#1f2135;letter-spacing:0.770px">mobile-app-api</div>
<div id="t50" class="t" style="left:550.75px;top:1320.02px;font-size:33px;font-weight:700;color:#1f2135;letter-spacing:0.000px;transform:scaleX(1.0938);transform-origin:0 0">0</div>
<div id="t51" class="t" style="left:570.00px;top:1330.50px;font-size:20px;font-weight:700;color:#1f2135;letter-spacing:0.000px;transform:scaleX(1.0588);transform-origin:0 0">%</div>
<div id="t52" class="t" style="left:716.75px;top:1272.99px;font-size:28px;font-weight:400;color:#1f2135;letter-spacing:0.771px">nginx.default</div>
<div id="t53" class="t" style="left:717.75px;top:1315.49px;font-size:28px;font-weight:700;color:#1f2135;letter-spacing:0.250px">0 of 40</div>
<div id="t54" class="t" style="left:816.25px;top:1315.49px;font-size:28px;font-weight:400;color:#1f2135;letter-spacing:0.000px;transform:scaleX(0.9936);transform-origin:0 0">OK</div>
<div id="t55" class="t" style="left:768.00px;top:1368.72px;font-size:29.5px;font-weight:700;color:#9a33b4;letter-spacing:0.000px;transform:scaleX(0.9375);transform-origin:0 0">40</div>
<div id="t56" class="t" style="left:1071.00px;top:1272.99px;font-size:28px;font-weight:400;color:#1f2135;letter-spacing:0.591px">custom/nginx</div>
<div id="t57" class="t" style="left:1425.00px;top:1272.99px;font-size:28px;font-weight:400;color:#1f2135;letter-spacing:1.053px">2.0.0/20190115189976</div>
<div id="t58" class="t" style="left:1777.75px;top:1272.99px;font-size:28px;font-weight:400;color:#1f2135;letter-spacing:1.247px">demo</div>
<div id="t59" class="t" style="left:2097.75px;top:1272.99px;font-size:28px;font-weight:400;color:#1f2135;letter-spacing:1.247px">demo</div>
<div id="t60" class="t" style="left:550.75px;top:1538.02px;font-size:33px;font-weight:700;color:#1f2135;letter-spacing:0.000px;transform:scaleX(1.0938);transform-origin:0 0">0</div>
<div id="t61" class="t" style="left:570.00px;top:1548.50px;font-size:20px;font-weight:700;color:#1f2135;letter-spacing:0.000px;transform:scaleX(1.0588);transform-origin:0 0">%</div>
<div id="t62" class="t" style="left:716.75px;top:1490.99px;font-size:28px;font-weight:400;color:#1f2135;letter-spacing:0.771px">nginx.default</div>
<div id="t63" class="t" style="left:717.75px;top:1533.49px;font-size:28px;font-weight:700;color:#1f2135;letter-spacing:0.167px">0 of 13</div>
<div id="t64" class="t" style="left:815.75px;top:1533.49px;font-size:28px;font-weight:400;color:#1f2135;letter-spacing:0.000px;transform:scaleX(0.9936);transform-origin:0 0">OK</div>
<div id="t65" class="t" style="left:766.00px;top:1586.72px;font-size:29.5px;font-weight:700;color:#9a33b4;letter-spacing:0.000px">13</div>
<div id="t66" class="t" style="left:1071.00px;top:1490.99px;font-size:28px;font-weight:400;color:#1f2135;letter-spacing:0.591px">custom/nginx</div>
<div id="t67" class="t" style="left:1424.00px;top:1490.99px;font-size:28px;font-weight:400;color:#1f2135;letter-spacing:1.105px">1.0.1/20190115184823</div>
<div id="t68" class="t" style="left:1777.75px;top:1490.99px;font-size:28px;font-weight:400;color:#1f2135;letter-spacing:1.650px">qa</div>
<div id="t69" class="t" style="left:2096.75px;top:1490.99px;font-size:28px;font-weight:400;color:#1f2135;letter-spacing:0.782px">bldr-cache</div>
<div id="t70" class="t" style="left:550.75px;top:1755.89px;font-size:33px;font-weight:700;color:#1f2135;letter-spacing:0.000px;transform:scaleX(1.0938);transform-origin:0 0">0</div>
<div id="t71" class="t" style="left:570.00px;top:1766.38px;font-size:20px;font-weight:700;color:#1f2135;letter-spacing:0.000px;transform:scaleX(1.0588);transform-origin:0 0">%</div>
<div id="t72" class="t" style="left:717.75px;top:1709.24px;font-size:28px;font-weight:400;color:#1f2135;letter-spacing:0.912px">sample-app.default</div>
<div id="t73" class="t" style="left:717.75px;top:1751.74px;font-size:28px;font-weight:700;color:#1f2135;letter-spacing:0.000px;transform:scaleX(0.9722);transform-origin:0 0">0 of 1</div>
<div id="t74" class="t" style="left:797.75px;top:1751.74px;font-size:28px;font-weight:400;color:#1f2135;letter-spacing:0.000px;transform:scaleX(0.9936);transform-origin:0 0">OK</div>
<div id="t75" class="t" style="left:767.00px;top:1804.97px;font-size:29.5px;font-weight:700;color:#9a33b4;letter-spacing:0.000px;transform:scaleX(0.8571);transform-origin:0 0">1</div>
<div id="t76" class="t" style="left:1071.00px;top:1709.24px;font-size:28px;font-weight:400;color:#1f2135;letter-spacing:0.832px">custom/sample-app</div>
<div id="t77" class="t" style="left:1425.00px;top:1709.24px;font-size:28px;font-weight:400;color:#1f2135;letter-spacing:0.895px">0.0.1/20190924222254</div>
<div id="t78" class="t" style="left:1777.75px;top:1709.24px;font-size:28px;font-weight:400;color:#1f2135;letter-spacing:0.862px">acceptance</div>
<div id="t79" class="t" style="left:2097.75px;top:1709.24px;font-size:28px;font-weight:400;color:#1f2135;letter-spacing:0.880px">sample-app</div>
<div id="t80" class="t" style="left:2577.00px;top:196.20px;font-size:39px;font-weight:700;color:#1f2135;letter-spacing:0.000px;transform:scaleX(0.8766);transform-origin:0 0">Services in billing-svc.default</div>
<div id="t81" class="t" style="left:2533.00px;top:266.76px;font-size:26.5px;font-weight:400;color:#6b7574;letter-spacing:0.128px">All services running in a service group.</div>
<div id="t82" class="t" style="left:2596.25px;top:347.97px;font-size:29.5px;font-weight:400;color:#1f2135;letter-spacing:0.250px">Total</div>
<div id="t83" class="t" style="left:2675.50px;top:347.97px;font-size:29.5px;font-weight:700;color:#1f2135;letter-spacing:1.500px">11</div>
<div id="t84" class="t" style="left:2813.50px;top:347.97px;font-size:29.5px;font-weight:400;color:#1f2135;letter-spacing:0.000px;transform:scaleX(0.9971);transform-origin:0 0">Critical</div>
<div id="t85" class="t" style="left:2919.25px;top:347.97px;font-size:29.5px;font-weight:700;color:#1f2135;letter-spacing:1.000px">11</div>
<div id="t86" class="t" style="left:3058.00px;top:347.97px;font-size:29.5px;font-weight:400;color:#1f2135;letter-spacing:0.717px">Warning</div>
<div id="t87" class="t" style="left:3184.70px;top:347.97px;font-size:29.5px;font-weight:700;color:#1f2135;letter-spacing:0.000px;transform:scaleX(1.1429);transform-origin:0 0">0</div>
<div id="t88" class="t" style="left:2596.00px;top:437.97px;font-size:29.5px;font-weight:400;color:#1f2135;letter-spacing:0.000px;transform:scaleX(0.9146);transform-origin:0 0">OK</div>
<div id="t89" class="t" style="left:2651.00px;top:437.97px;font-size:29.5px;font-weight:700;color:#1f2135;letter-spacing:0.000px;transform:scaleX(1.1071);transform-origin:0 0">0</div>
<div id="t90" class="t" style="left:2771.25px;top:437.97px;font-size:29.5px;font-weight:400;color:#1f2135;letter-spacing:0.375px">Unknown</div>
<div id="t91" class="t" style="left:2911.50px;top:437.97px;font-size:29.5px;font-weight:700;color:#1f2135;letter-spacing:0.000px;transform:scaleX(1.1071);transform-origin:0 0">0</div>
<div id="t92" class="t" style="left:2613.00px;top:557.24px;font-size:28px;font-weight:400;color:#1f2135;letter-spacing:0.688px">localhost</div>
<div id="t93" class="t" style="left:2565.25px;top:612.68px;font-size:26px;font-weight:700;color:#1f2135;letter-spacing:0.000px;transform:scaleX(0.8741);transform-origin:0 0">Supervisor:</div>
<div id="t94" class="t" style="left:2697.75px;top:613.95px;font-size:24.5px;font-weight:400;color:#1f2135;letter-spacing:0.800px">029a3a8a-20ac-4590-850e-9a4aac86efc5</div>
<div id="t95" class="t" style="left:2565.25px;top:660.93px;font-size:26px;font-weight:700;color:#1f2135;letter-spacing:0.000px;transform:scaleX(0.8821);transform-origin:0 0">Site:</div>
<div id="t96" class="t" style="left:2622.50px;top:662.20px;font-size:24.5px;font-weight:400;color:#1f2135;letter-spacing:0.321px">testsite</div>
<div id="t97" class="t" style="left:2614.25px;top:777.93px;font-size:26px;font-weight:400;color:#9a33b4;letter-spacing:0.128px">Disconnected service: Last health check received</div>
<div id="t98" class="t" style="left:2615.25px;top:818.43px;font-size:26px;font-weight:400;color:#9a33b4;letter-spacing:0.368px">2 months 9 days ago.</div>
<div id="t99" class="t" style="left:2607.00px;top:889.24px;font-size:28px;font-weight:400;color:#1f2135;letter-spacing:0.862px">custom/billing-svc/1.3.4/20190115182382</div>
<div id="t100" class="t" style="left:2616.50px;top:944.31px;font-size:22px;font-weight:700;color:#1f2135;letter-spacing:0.000px;transform:scaleX(0.9077);transform-origin:0 0">STABLE: AT-ONCE</div>
<div id="t101" class="t" style="left:2607.00px;top:1000.93px;font-size:26px;font-weight:400;color:#1f2135;letter-spacing:0.000px;transform:scaleX(0.9838);transform-origin:0 0">Critical</div>
<div id="t102" class="t" style="left:2607.00px;top:1051.78px;font-size:25px;font-weight:400;color:#6b7574;letter-spacing:0.125px">Since the service was loaded, 2 months 9 days ago</div>
<div id="t103" class="t" style="left:2613.00px;top:1183.49px;font-size:28px;font-weight:400;color:#1f2135;letter-spacing:0.688px">localhost</div>
<div id="t104" class="t" style="left:2565.25px;top:1238.93px;font-size:26px;font-weight:700;color:#1f2135;letter-spacing:0.000px;transform:scaleX(0.8741);transform-origin:0 0">Supervisor:</div>
<div id="t105" class="t" style="left:2696.75px;top:1240.20px;font-size:24.5px;font-weight:400;color:#1f2135;letter-spacing:0.886px">1e95554f-2cb8-4c52-b34f-e94634996ad9</div>
<div id="t106" class="t" style="left:2565.25px;top:1287.18px;font-size:26px;font-weight:700;color:#1f2135;letter-spacing:0.000px;transform:scaleX(0.8821);transform-origin:0 0">Site:</div>
<div id="t107" class="t" style="left:2622.50px;top:1288.45px;font-size:24.5px;font-weight:400;color:#1f2135;letter-spacing:0.321px">testsite</div>
<div id="t108" class="t" style="left:2614.25px;top:1402.18px;font-size:26px;font-weight:400;color:#9a33b4;letter-spacing:0.128px">Disconnected service: Last health check received</div>
<div id="t109" class="t" style="left:2615.25px;top:1442.68px;font-size:26px;font-weight:400;color:#9a33b4;letter-spacing:0.368px">2 months 9 days ago.</div>
<div id="t110" class="t" style="left:2607.00px;top:1513.49px;font-size:28px;font-weight:400;color:#1f2135;letter-spacing:0.862px">custom/billing-svc/1.3.4/20190115182382</div>
<div id="t111" class="t" style="left:2616.50px;top:1568.56px;font-size:22px;font-weight:700;color:#1f2135;letter-spacing:0.000px;transform:scaleX(0.9077);transform-origin:0 0">STABLE: AT-ONCE</div>
<div id="t112" class="t" style="left:2607.00px;top:1625.18px;font-size:26px;font-weight:400;color:#1f2135;letter-spacing:0.000px;transform:scaleX(0.9838);transform-origin:0 0">Critical</div>
<div id="t113" class="t" style="left:2607.00px;top:1676.03px;font-size:25px;font-weight:400;color:#6b7574;letter-spacing:0.125px">Since the service was loaded, 2 months 9 days ago</div>
<div id="t114" class="t" style="left:2613.00px;top:1807.89px;font-size:28px;font-weight:400;color:#1f2135;letter-spacing:0.688px">localhost</div>
<div id="t115" class="t" style="left:2565.25px;top:1863.33px;font-size:26px;font-weight:700;color:#1f2135;letter-spacing:0.000px;transform:scaleX(0.8741);transform-origin:0 0">Supervisor:</div>
<div id="t116" class="t" style="left:2697.75px;top:1864.60px;font-size:24.5px;font-weight:400;color:#1f2135;letter-spacing:0.829px">2fb65869-de1b-4341-8150-3f8a7e4c5dee</div>
<div id="t117" class="t" style="left:2565.25px;top:1911.58px;font-size:26px;font-weight:700;color:#1f2135;letter-spacing:0.000px;transform:scaleX(0.8821);transform-origin:0 0">Site:</div>
<div id="t118" class="t" style="left:2622.50px;top:1912.85px;font-size:24.5px;font-weight:400;color:#1f2135;letter-spacing:0.321px">testsite</div>
<div id="t119" class="t" style="left:2614.25px;top:2028.58px;font-size:26px;font-weight:400;color:#9a33b4;letter-spacing:0.128px">Disconnected service: Last health check received</div>
<div id="t120" class="t" style="left:2615.25px;top:2069.08px;font-size:26px;font-weight:400;color:#9a33b4;letter-spacing:0.368px">2 months 9 days ago.</div>
<div id="t121" class="t" style="left:2607.00px;top:2139.89px;font-size:28px;font-weight:400;color:#1f2135;letter-spacing:0.862px">custom/billing-svc/1.3.4/20190115182382</div>
<div id="t122" class="t" style="left:2616.50px;top:2194.96px;font-size:22px;font-weight:700;color:#1f2135;letter-spacing:0.000px;transform:scaleX(0.9077);transform-origin:0 0">STABLE: AT-ONCE</div>
<div id="t123" class="t" style="left:2607.00px;top:2251.58px;font-size:26px;font-weight:400;color:#1f2135;letter-spacing:0.000px;transform:scaleX(0.9838);transform-origin:0 0">Critical</div>
<div id="t124" class="t" style="left:2607.00px;top:2302.43px;font-size:25px;font-weight:400;color:#6b7574;letter-spacing:0.125px">Since the service was loaded, 2 months 9 days ago</div>
</body></html>
